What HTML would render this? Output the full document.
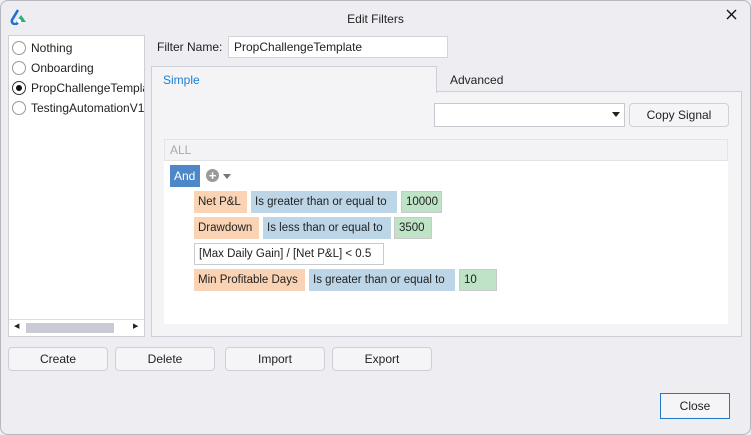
<!DOCTYPE html>
<html><head><meta charset="utf-8"><style>
*{box-sizing:border-box;margin:0;padding:0}
body{width:751px;height:435px;background:#eeedf2;font-family:"Liberation Sans",sans-serif;font-size:12px;color:#222;position:relative;overflow:hidden}
.a{position:absolute}
.win{left:0;top:0;width:751px;height:435px;border:1px solid #b8b8bc;border-radius:8px;background:#eeedf2}
.btn{position:absolute;height:24px;border:1px solid #cfcfd6;border-radius:4px;background:#f5f5f8;text-align:center;line-height:22px;font-size:12px;color:#222}
.chip{position:absolute;height:22px;line-height:22px;padding:0 4px;font-size:11.5px;color:#222;white-space:nowrap;overflow:hidden}
.o{background:#f9d3b3}.b{background:#bcd6e8}.g{background:#bfe3c7;border:1px solid #c9c9c9;line-height:20px}
.radio{position:absolute;width:14px;height:14px;border:1px solid #999;border-radius:50%;background:#fff}
.li{position:absolute;font-size:12px;white-space:nowrap}
</style></head><body>
<div class="a win"></div>
<svg class="a" style="left:9px;top:9px" width="18" height="16" viewBox="0 0 18 16"><path d="M9 1 L3 11 A3 3 0 0 0 9 13" fill="none" stroke="#1e6fd9" stroke-width="2.6"/><path d="M7 13 L12 6 L17 13 Z" fill="#2bb07a"/><circle cx="10" cy="12" r="2.2" fill="#fff"/></svg>
<div class="a" style="left:0;width:751px;top:12px;text-align:center;font-size:12px">Edit Filters</div>
<svg class="a" style="left:726px;top:9px" width="11" height="11" viewBox="0 0 11 11"><path d="M1 1L10 10M10 1L1 10" stroke="#111" stroke-width="1.4"/></svg>

<div class="a" style="left:8px;top:35px;width:137px;height:302px;border:1px solid #cfcfd6;background:#fff;overflow:hidden">
<div class="radio" style="left:3px;top:5px"></div><div class="li" style="left:22px;top:5px">Nothing</div>
<div class="radio" style="left:3px;top:25px"></div><div class="li" style="left:22px;top:25px">Onboarding</div>
<div class="radio" style="left:3px;top:45px;border-color:#333"><div style="position:absolute;left:3px;top:3px;width:6px;height:6px;border-radius:50%;background:#111"></div></div><div class="li" style="left:22px;top:45px">PropChallengeTemplate</div>
<div class="radio" style="left:3px;top:65px"></div><div class="li" style="left:22px;top:65px">TestingAutomationV1</div>
<div class="a" style="left:0;top:283px;width:135px;height:17px;border-top:1px solid #ddd;background:#fff"></div>
<div class="a" style="left:17px;top:287px;width:88px;height:10px;background:#c9cad6"></div>
<div class="a" style="left:5px;top:286px;font-size:7px">◀</div>
<div class="a" style="left:124px;top:286px;font-size:7px">▶</div>
</div>

<div class="a" style="left:157px;top:40px">Filter Name:</div>
<div class="a" style="left:228px;top:36px;width:220px;height:22px;border:1px solid #d4d4da;background:#fff;padding-left:5px;line-height:20px">PropChallengeTemplate</div>

<div class="a" style="left:151px;top:91px;width:591px;height:246px;border:1px solid #cfcfd8;background:#f4f4f7"></div>
<div class="a" style="left:151px;top:66px;width:286px;height:27px;border:1px solid #cfcfd8;border-bottom:none;background:#f4f4f7"></div>
<div class="a" style="left:163px;top:73px;color:#1a7fd0">Simple</div>
<div class="a" style="left:450px;top:73px">Advanced</div>

<div class="a" style="left:434px;top:103px;width:191px;height:24px;border:1px solid #c8c8d0;background:#fff"></div>
<svg class="a" style="left:612px;top:112px" width="8" height="5"><path d="M0 0H8L4 5Z" fill="#222"/></svg>
<div class="btn" style="left:629px;top:103px;width:100px">Copy Signal</div>

<div class="a" style="left:164px;top:139px;width:564px;height:185px;background:#fff"></div>
<div class="a" style="left:164px;top:139px;width:564px;height:22px;background:#f3f3f5;border:1px solid #e4e4e8;color:#aaa;padding-left:5px;line-height:20px">ALL</div>
<div class="chip" style="left:170px;top:165px;width:30px;background:#4d87c7;color:#fff;font-size:12px">And</div>
<div class="a" style="left:206px;top:169px;width:13px;height:13px;border-radius:50%;background:#9a9a9a;color:#fff;font-size:13px;line-height:13px;text-align:center;font-weight:bold">+</div>
<svg class="a" style="left:223px;top:174px" width="8" height="5"><path d="M0 0H8L4 5Z" fill="#777"/></svg>

<div class="chip o" style="left:194px;top:191px;width:53px">Net P&amp;L</div>
<div class="chip b" style="left:251px;top:191px;width:146px">Is greater than or equal to</div>
<div class="chip g" style="left:401px;top:191px;width:41px">10000</div>

<div class="chip o" style="left:194px;top:217px;width:65px">Drawdown</div>
<div class="chip b" style="left:263px;top:217px;width:128px">Is less than or equal to</div>
<div class="chip g" style="left:394px;top:217px;width:38px">3500</div>

<div class="chip" style="left:194px;top:243px;width:190px;border:1px solid #c9c9d2;line-height:20px">[Max Daily Gain] / [Net P&amp;L] &lt; 0.5</div>

<div class="chip o" style="left:194px;top:269px;width:111px">Min Profitable Days</div>
<div class="chip b" style="left:309px;top:269px;width:146px">Is greater than or equal to</div>
<div class="chip g" style="left:459px;top:269px;width:38px">10</div>

<div class="btn" style="left:8px;top:347px;width:100px">Create</div>
<div class="btn" style="left:115px;top:347px;width:100px">Delete</div>
<div class="btn" style="left:225px;top:347px;width:100px">Import</div>
<div class="btn" style="left:332px;top:347px;width:100px">Export</div>
<div class="btn" style="left:660px;top:393px;width:70px;height:26px;border:1px solid #1f78c8;border-radius:0;line-height:24px">Close</div>
</body></html>
